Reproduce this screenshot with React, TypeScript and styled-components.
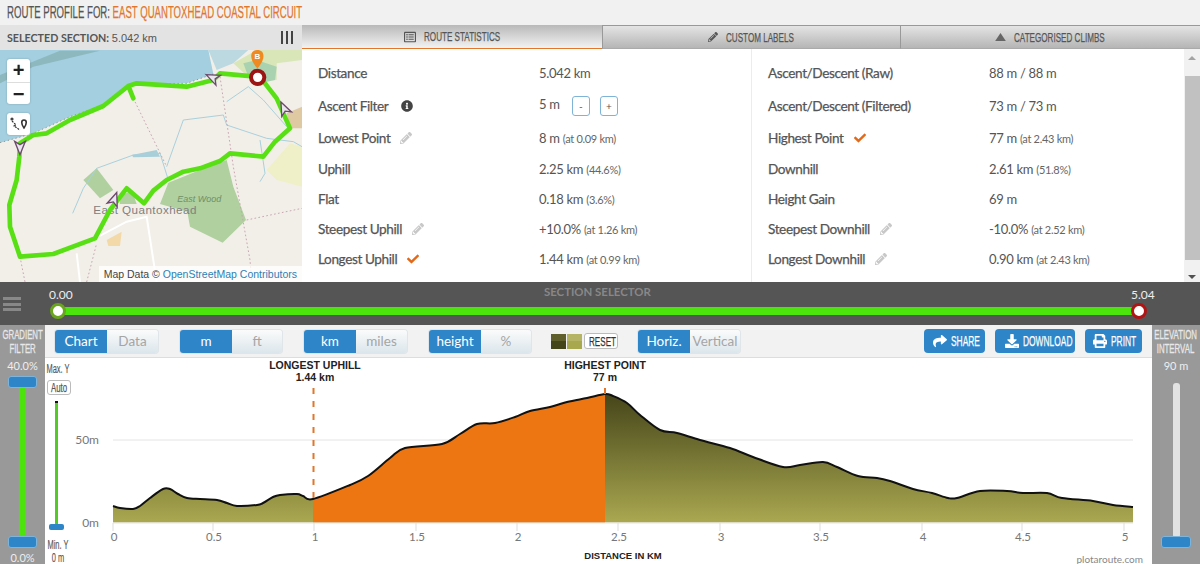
import React from "react";
import styled, { createGlobalStyle } from "styled-components";
import { FaShare, FaDownload, FaPrint, FaPencilAlt, FaCheck, FaInfoCircle, FaRegListAlt } from "react-icons/fa";

const Global = createGlobalStyle`
  html, body { margin: 0; padding: 0; background: #fff; }
  body { font-family: "Lato", "Liberation Sans", sans-serif; overflow: hidden; }
  * { box-sizing: border-box; }
`;

const Page = styled.div`width: 1200px; height: 564px; display: flex; flex-direction: column; overflow: hidden;`;
const Cond = styled.span<{ $w: number; $size?: number }>`
  display: inline-block; width: ${p => p.$w}px; white-space: nowrap; transform-origin: 0 50%; transform: scaleX(.6);
  font-family: "Liberation Sans", sans-serif; font-size: ${p => p.$size ?? 13.5}px; -webkit-text-stroke: .25px currentColor;
`;
const Header = styled.div`height: 25px; background: #f1f1f1; padding-left: 7px; display: flex; align-items: center; color: #555;`;
const Accent = styled.span`color: #e2762a;`;
const Top = styled.div`height: 257px; display: flex;`;
const MapColumn = styled.div`width: 302px; display: flex; flex-direction: column;`;
const SelectedBar = styled.div`
  height: 25px; background: #e3e3e3; display: flex; align-items: center; justify-content: space-between;
  padding: 0 9px 0 7px; font-size: 10.7px; color: #555; white-space: nowrap;
`;
const SelectedValue = styled.span`font-family: "Liberation Sans", sans-serif; font-size: 11px;`;
const ColumnsGlyph = styled.div`
  width: 12px; height: 13px; border-left: 2px solid #444; border-right: 2px solid #444; position: relative;
  &::after { content: ""; position: absolute; left: 3px; top: 0; bottom: 0; width: 2px; background: #444; }
`;
const MapBox = styled.div`position: relative; height: 232px; overflow: hidden; background: #f2efe9;`;
const MapSvg = styled.svg`display: block; width: 302px; height: 232px;`;
const Zoom = styled.div`
  position: absolute; left: 7px; top: 9px; width: 23px; height: 45px; background: #fff; border-radius: 3px;
  display: grid; grid-template-rows: 1fr 1fr; box-shadow: 0 0 2px rgba(0,0,0,.25);
`;
const ZoomKey = styled.div<{ $line?: boolean }>`
  display: flex; align-items: center; justify-content: center; font: bold 20px "Liberation Sans", sans-serif; color: #222;
  border-bottom: ${p => (p.$line ? "1px solid #ddd" : "none")};
`;
const RouteKey = styled.div`
  position: absolute; left: 7px; top: 63px; width: 23px; height: 22px; background: #fff; border-radius: 3px;
  display: flex; align-items: center; justify-content: center; box-shadow: 0 0 2px rgba(0,0,0,.25);
`;
const Attribution = styled.div`
  position: absolute; right: 0; bottom: 0; height: 16px; padding: 0 5px; background: rgba(255,255,255,.8);
  font: 10.5px/16px "Liberation Sans", sans-serif; color: #444; white-space: nowrap;
`;
const OsmLink = styled.span`color: #2f7fb5;`;
const StatsColumn = styled.div`flex: 1; display: flex; flex-direction: column; min-width: 0;`;
const Tabs = styled.div`height: 24px; display: flex;`;
const Tab = styled.div<{ $active?: boolean; $w: number }>`
  width: ${p => p.$w}px; display: flex; align-items: center; justify-content: center; gap: 8px; color: #555;
  background: ${p => (p.$active ? "linear-gradient(#b9b9b9, #f2f2f2)" : "linear-gradient(#e4e4e4, #b5b5b5)")};
  border-bottom: 1px solid ${p => (p.$active ? "#e2762a" : "#aaa")};
  border-left: ${p => (p.$active ? "none" : "1px solid #999")};
  border-top: ${p => (p.$active ? "none" : "1px solid #999")};
  svg { color: #555; }
`;
const StatsBody = styled.div`flex: 1; display: flex; min-height: 0;`;
const StatsPane = styled.div<{ $w: number; $line?: boolean }>`
  width: ${p => p.$w}px; padding: 7px 0 0 16px;
  border-left: ${p => (p.$line ? "1px solid #ececec" : "none")};
`;
const Row = styled.div<{ $h?: number }>`
  height: ${p => p.$h ?? 30}px; display: grid; grid-template-columns: 221px 1fr; align-items: center;
`;
const Label = styled.div`
  font-size: 13.6px; letter-spacing: -.4px; -webkit-text-stroke: .25px #555; color: #555; display: flex; align-items: center; gap: 10px; white-space: nowrap;
`;
const InfoIcon = styled(FaInfoCircle)`margin-left: 3px; color: #444; font-size: 12px;`;
const Value = styled.div`font-size: 13px; letter-spacing: -.3px; color: #555; white-space: nowrap;`;
const Small = styled.span`font-size: 11px; letter-spacing: -.3px; color: #666;`;
const StepButton = styled.span<{ $ml: number }>`
  width: 18px; height: 20px; border: 1px solid #7fb4d8; border-radius: 3px; display: inline-flex; align-items: center; justify-content: center;
  font-size: 10px; color: #555; margin-left: ${p => p.$ml}px; vertical-align: middle;
`;
const Scroll = styled.div`
  width: 16px; background: #f1f1f1; display: flex; flex-direction: column; align-items: center; justify-content: space-between; padding: 7px 0 3px;
`;
const ScrollThumb = styled.div`width: 15px; height: 184px; background: #c1c1c1;`;
const ScrollArrow = styled.div<{ $up?: boolean }>`
  width: 0; height: 0; border-left: 4px solid transparent; border-right: 4px solid transparent;
  ${p => (p.$up ? "border-bottom: 4px solid #a3a3a3;" : "border-top: 4px solid #505050;")}
`;
const SelectorBar = styled.div`height: 43px; background: #555; position: relative;`;
const Burger = styled.div`
  position: absolute; left: 3px; top: 15px; width: 18px; height: 14px;
  border-top: 3px solid #888; border-bottom: 3px solid #888;
  &::after { content: ""; position: absolute; left: 0; right: 0; top: 2.5px; height: 3px; background: #888; }
`;
const SelectorTitle = styled.div`
  position: absolute; left: 544px; top: 3px; font-size: 11.4px; font-weight: 700; color: #888; white-space: nowrap;
`;
const Track = styled.div`position: absolute; left: 58px; width: 1081px; top: 25px; height: 8px; background: #4be30b;`;
const Knob = styled.div<{ $x: number; $c: string }>`
  position: absolute; left: ${p => p.$x - 8}px; top: 21px; width: 16px; height: 16px; border-radius: 50%;
  background: #fff; border: 3.5px solid ${p => p.$c};
`;
const End = styled.div<{ $x: number }>`
  position: absolute; left: ${p => p.$x}px; top: 5px; font-size: 12px; color: #eee;
`;
const Bottom = styled.div`flex: 1; display: flex; min-height: 0;`;
const Side = styled.div<{ $w: number }>`
  width: ${p => p.$w}px; background: #999; display: flex; flex-direction: column; align-items: center; padding-top: 3px; color: #eee; position: relative;
`;
const SideTitle = styled.div`
  width: max-content; transform: scaleX(.6); font: 13px/14px "Liberation Sans", sans-serif; -webkit-text-stroke: .3px #e8e8e8;
  text-align: center; color: #e8e8e8; white-space: nowrap;
`;
const SideValue = styled.div`font-size: 11px; margin-top: 2px; line-height: 16px; color: #eee;`;
const SideFoot = styled(SideValue)`position: absolute; bottom: -2px;`;
const Thumb = styled.div<{ $top: number; $w: number }>`
  position: absolute; top: ${p => p.$top}px; left: 50%; margin-left: ${p => -p.$w / 2}px; width: ${p => p.$w}px; height: 12px;
  background: #2e86c9; border: 1px solid #7db4dc; border-radius: 3px;
`;
const Rail = styled.div<{ $c: string; $top: number; $h: number; $w: number }>`
  position: absolute; top: ${p => p.$top}px; height: ${p => p.$h}px; width: ${p => p.$w}px; left: 50%; margin-left: ${p => -p.$w / 2}px;
  background: ${p => p.$c}; border-radius: 3px;
`;
const Centre = styled.div`flex: 1; display: flex; flex-direction: column; min-width: 0;`;
const Toolbar = styled.div`
  height: 33px; background: #f2f2f2; border-bottom: 1px solid #ddd; display: flex; align-items: center; padding: 0 10px; gap: 22px;
`;
const Segmented = styled.div`display: flex; height: 23px; border-radius: 3px; overflow: hidden; box-shadow: 0 0 0 1px #dfe5e8;`;
const Seg = styled.div<{ $on?: boolean; $w: number }>`
  width: ${p => p.$w}px; display: flex; align-items: center; justify-content: center; font-size: 13.5px;
  color: ${p => (p.$on ? "#fff" : "#a5a5a5")};
  background: ${p => (p.$on ? "#2e86c9" : "linear-gradient(#fbfbfb, #dbe6ec)")};
`;
const Swatches = styled.div`display: flex; align-items: center; gap: 1px; margin: 0 -2px;`;
const Swatch = styled.div<{ $a: string; $b: string }>`
  width: 15px; height: 15px; background: linear-gradient(${p => p.$a} 50%, ${p => p.$b} 50%);
`;
const Reset = styled.div`
  margin-left: 1px; width: 34px; height: 16px; background: #fff; border: 1px solid #bbb; border-radius: 3px; padding-left: 4px;
  color: #333; display: flex; align-items: center;
`;
const Actions = styled.div`margin-left: auto; display: flex; gap: 10px;`;
const Action = styled.div<{ $w: number }>`
  width: ${p => p.$w}px; height: 24px; background: #2e86c9; border-radius: 4px; color: #fff; display: flex; align-items: center; justify-content: center; gap: 4px;
`;
const ChartRow = styled.div`flex: 1; display: flex; min-height: 0; background: #fff;`;
const YColumn = styled.div`width: 30px; position: relative; color: #555;`;
const YText = styled.div<{ $top: number }>`
  position: absolute; top: ${p => p.$top}px; left: -10px; width: 46px; text-align: center; white-space: nowrap;
  transform: scaleX(.62); font: 12px "Liberation Sans", sans-serif; -webkit-text-stroke: .15px #555;
`;
const AutoBtn = styled.div`
  position: absolute; left: 2px; top: 22px; width: 24px; height: 15px; border: 1px solid #bbb; border-radius: 3px; background: #fff;
  padding-left: 3px; display: flex; align-items: center;
`;
const YRail = styled.div`position: absolute; left: 10px; top: 43px; width: 3px; height: 126px; background: #55c926; border-top: 2px solid #111;`;
const YThumb = styled.div`position: absolute; left: 4px; top: 166px; width: 15px; height: 6px; border-radius: 2px; background: #2e86c9;`;
const ChartSvg = styled.svg`display: block; width: 1077px; height: 206px;`;
const ChartLabel = styled.text`font: bold 10.5px "Liberation Sans", sans-serif; fill: #222; text-anchor: middle;`;
const AxisTitle = styled(ChartLabel)`font-size: 9.5px;`;
const Tick = styled.text`font: 11.5px "Lato", sans-serif; fill: #777; text-anchor: middle;`;
const AxisY = styled.text`font: 12px "Lato", sans-serif; fill: #777; text-anchor: end;`;
const Credit = styled.text`font: 10px "Lato", sans-serif; fill: #888; text-anchor: end;`;

const profile: [number, number][] = [
  [113,506],[120,508],[133,509],[140,506],[150,498],[163,489],[170,489],[178,494],[187,498],[200,499],[217,500],[227,503],[237,506],[257,505],[263,503],[273,497],[280,495],[297,494],[303,496],[313,499],
  [350,485],[368,476],[390,458],[405,448],[442,444],[460,434],[477,424],[495,423],[515,417],[530,411],[550,407],[567,402],[587,398],[605,394],
  [613,396],[627,403],[640,415],[660,430],[677,433],[700,440],[730,448],[753,457],[783,467],[800,465],[823,462],[837,467],[858,476],[877,478],[890,481],[913,489],[932,493],[948,498],[957,498],[980,491],[1007,491],[1023,493],[1047,493],[1062,498],[1093,501],[1113,505],[1133,507],
];
const BASE = 522.5;
const smooth = (a: [number, number][]) => {
  let d = `M${a[0][0]} ${a[0][1]}`;
  for (let i = 0; i < a.length - 1; i++) {
    const p0 = a[Math.max(i - 1, 0)], p1 = a[i], p2 = a[i + 1], p3 = a[Math.min(i + 2, a.length - 1)];
    const c1 = [p1[0] + (p2[0] - p0[0]) / 6, p1[1] + (p2[1] - p0[1]) / 6];
    const c2 = [p2[0] - (p3[0] - p1[0]) / 6, p2[1] - (p3[1] - p1[1]) / 6];
    d += ` C${c1[0].toFixed(1)} ${c1[1].toFixed(1)} ${c2[0].toFixed(1)} ${c2[1].toFixed(1)} ${p2[0]} ${p2[1]}`;
  }
  return d;
};
const line = smooth(profile);
const area = `${line} L1133 ${BASE} L113 ${BASE} Z`;
const ticks = [[113,"0"],[213,"0.5"],[314,"1"],[416,"1.5"],[517,"2"],[618,"2.5"],[720,"3"],[820,"3.5"],[922,"4"],[1022,"4.5"],[1124,"5"]] as const;

const route = "60,770 160,762 285,715 330,630 380,565 432,610 460,572 500,540 550,515 600,505 660,483 690,460 790,470 825,425 870,385 850,340 830,295 795,250 770,230 660,220 640,240 560,260 410,250 385,258 400,295 385,258 310,318 210,360 140,400 100,405 60,430 58,470 50,540 28,615 30,680 60,770";

const Arrow = ({ x, y, r }: { x: number; y: number; r: number }) => (
  <g transform={`translate(${x} ${y}) rotate(${r})`}>
    <path d="M0 -24 L16 16 L0 6 L-16 16 Z" fill="#e9e6ee" stroke="#6d4a6d" strokeWidth="4" />
  </g>
);

const RouteMap = () => (
  <MapSvg viewBox="0 150 906 696">
    <rect x="0" y="150" width="906" height="696" fill="#a3cfe0" />
    <path d="M0 428 L100 400 L210 350 L310 315 L385 252 L560 250 L640 222 L625 150 L906 150 L906 846 L0 846 Z" fill="#f2efe9" />
    <path d="M0 250 L100 200 L300 152 L180 152 L0 225 Z" fill="#7fa9a5" opacity=".6" />
    <path d="M625 150 L745 150 L700 190 L650 210 Z" fill="#bcd9e2" />
    <path d="M700 190 L770 150 L906 150 L906 180 L830 190 L830 240 L760 245 Z" fill="#d8e6b8" />
    <path d="M730 190 L770 180 L830 200 L825 240 L780 250 L745 230 Z" fill="#a9d2b0" />
    <path d="M480 612 L505 548 L600 510 L680 480 L700 560 L738 660 L668 728 L570 680 L562 635 Z" fill="#b0d0a0" />
    <path d="M250 540 L290 505 L340 570 L300 595 Z" fill="#b0d0a0" />
    <path d="M360 590 L395 570 L410 612 L360 612 Z" fill="#b0d0a0" />
    <path d="M395 465 L470 450 L480 470 L400 472 Z" fill="#a8cfd8" />
    <path d="M800 510 L870 430 L906 440 L906 560 L830 540 Z" fill="#eff0c8" />
    <path d="M860 340 L906 320 L906 385 L870 385 Z" fill="#dfc9a3" />
    <path d="M320 720 L365 695 L360 738 L325 738 Z" fill="#f3d9a8" />
    <g fill="none" stroke="#a9d0dc" strokeWidth="3">
      <path d="M218 640 L250 565 L290 505 L400 465 L480 460 L505 540" />
      <path d="M500 500 L550 360 L670 345 L680 375 L800 415 L880 425 L906 440" />
      <path d="M780 420 L795 520 L780 545" />
      <path d="M680 305 L745 260 L790 300 L860 380" />
    </g>
    <g fill="none" stroke="#fff" strokeWidth="6">
      <path d="M285 715 L380 665 L440 650 L470 846" />
      <path d="M230 760 L240 846" />
    </g>
    <g fill="none" stroke="#c9a6b0" strokeWidth="3" strokeDasharray="5 7">
      <path d="M400 295 L500 500" />
      <path d="M660 230 L700 500 L750 780 L755 846" />
      <path d="M740 660 L906 625" />
      <path d="M60 770 L75 846" />
      <path d="M260 846 L290 730" />
    </g>
    <path d="M0 428 L100 400 L210 350 L310 315 L385 252 L560 250 L640 222" fill="none" stroke="#8f9a98" strokeWidth="3" strokeDasharray="4 8" />
    <text x="280" y="641" fontFamily="Liberation Sans, sans-serif" fontSize="35" fill="#808080" letterSpacing="1.3">East Quantoxhead</text>
    <text x="532" y="606" fontFamily="Liberation Sans, sans-serif" fontSize="27" fontStyle="italic" fill="#6f8f66">East Wood</text>
    <polyline points={route} fill="none" stroke="#58e015" strokeWidth="14" strokeLinejoin="round" strokeLinecap="round" />
    <Arrow x={60} y={440} r={180} />
    <Arrow x={342} y={600} r={20} />
    <Arrow x={640} y={234} r={-65} />
    <Arrow x={853} y={328} r={-25} />
    <path d="M772 205 C745 175 750 150 772 150 C794 150 799 175 772 205 Z" fill="#ee8a1f" />
    <text x="772" y="178" textAnchor="middle" fontFamily="Liberation Sans, sans-serif" fontWeight="700" fontSize="24" fill="#fff">B</text>
    <circle cx="773" cy="232" r="20" fill="#fff" stroke="#9c1414" strokeWidth="12" />
  </MapSvg>
);

const Triangle = () => (
  <svg width="11" height="8" viewBox="0 0 12 9"><path d="M6 0 L12 9 L0 9 Z" fill="#666" /></svg>
);
const Pencil = () => <FaPencilAlt size={12} color="#c8c8c8" />;
const Tickmark = () => <FaCheck size={12} color="#e2691a" />;

export default function App() {
  return (
    <Page>
      <Global />
      <Header><Cond $w={294} $size={16}>ROUTE PROFILE FOR: <Accent>EAST QUANTOXHEAD COASTAL CIRCUIT</Accent></Cond></Header>
      <Top>
        <MapColumn>
          <SelectedBar>
            <span><b>SELECTED SECTION:</b> <SelectedValue>5.042 km</SelectedValue></span>
            <ColumnsGlyph />
          </SelectedBar>
          <MapBox>
            <RouteMap />
            <Zoom><ZoomKey $line>+</ZoomKey><ZoomKey>−</ZoomKey></Zoom>
            <RouteKey>
              <svg width="19" height="16" viewBox="0 0 19 16">
                <circle cx="3" cy="3" r="1.6" fill="#444" />
                <path d="M3 5 L7 9 L5 10 L11 14" fill="none" stroke="#333" strokeWidth="1.2" strokeDasharray="2 1" />
                <path d="M15 12 C12 8 12 4 15 4 C18 4 18 8 15 12 Z" fill="none" stroke="#333" strokeWidth="1.6" />
              </svg>
            </RouteKey>
            <Attribution>Map Data © <OsmLink>OpenStreetMap Contributors</OsmLink></Attribution>
          </MapBox>
        </MapColumn>
        <StatsColumn>
          <Tabs>
            <Tab $active $w={300}><FaRegListAlt size={12} /> <Cond $w={77}>ROUTE STATISTICS</Cond></Tab>
            <Tab $w={298}><FaPencilAlt size={10} /> <Cond $w={70}>CUSTOM LABELS</Cond></Tab>
            <Tab $w={300}><Triangle /> <Cond $w={93}>CATEGORISED CLIMBS</Cond></Tab>
          </Tabs>
          <StatsBody>
            <StatsPane $w={449}>
              <Row $h={33}><Label>Distance</Label><Value>5.042 km</Value></Row>
              <Row $h={33}><Label>Ascent Filter <InfoIcon /></Label><Value>5 m<StepButton $ml={12}>-</StepButton><StepButton $ml={10}>+</StepButton></Value></Row>
              <Row $h={32}><Label>Lowest Point <Pencil /></Label><Value>8 m <Small>(at 0.09 km)</Small></Value></Row>
              <Row><Label>Uphill</Label><Value>2.25 km <Small>(44.6%)</Small></Value></Row>
              <Row><Label>Flat</Label><Value>0.18 km <Small>(3.6%)</Small></Value></Row>
              <Row><Label>Steepest Uphill <Pencil /></Label><Value>+10.0% <Small>(at 1.26 km)</Small></Value></Row>
              <Row><Label>Longest Uphill <Tickmark /></Label><Value>1.44 km <Small>(at 0.99 km)</Small></Value></Row>
            </StatsPane>
            <StatsPane $w={433} $line>
              <Row $h={33}><Label>Ascent/Descent (Raw)</Label><Value>88 m / 88 m</Value></Row>
              <Row $h={33}><Label>Ascent/Descent (Filtered)</Label><Value>73 m / 73 m</Value></Row>
              <Row $h={32}><Label>Highest Point <Tickmark /></Label><Value>77 m <Small>(at 2.43 km)</Small></Value></Row>
              <Row><Label>Downhill</Label><Value>2.61 km <Small>(51.8%)</Small></Value></Row>
              <Row><Label>Height Gain</Label><Value>69 m</Value></Row>
              <Row><Label>Steepest Downhill <Pencil /></Label><Value>-10.0% <Small>(at 2.52 km)</Small></Value></Row>
              <Row><Label>Longest Downhill <Pencil /></Label><Value>0.90 km <Small>(at 2.43 km)</Small></Value></Row>
            </StatsPane>
            <Scroll><ScrollArrow $up /><ScrollThumb /><ScrollArrow /></Scroll>
          </StatsBody>
        </StatsColumn>
      </Top>
      <SelectorBar>
        <Burger />
        <SelectorTitle>SECTION SELECTOR</SelectorTitle>
        <End $x={49}>0.00</End>
        <End $x={1131}>5.04</End>
        <Track />
        <Knob $x={58} $c="#6aa51e" />
        <Knob $x={1139} $c="#b01414" />
      </SelectorBar>
      <Bottom>
        <Side $w={45}>
          <SideTitle>GRADIENT<br />FILTER</SideTitle>
          <SideValue>40.0%</SideValue>
          <Rail $c="#4be30b" $top={60} $h={152} $w={7} />
          <Thumb $top={51} $w={29} />
          <Thumb $top={211} $w={29} />
          <SideFoot>0.0%</SideFoot>
        </Side>
        <Centre>
          <Toolbar>
            <Segmented><Seg $on $w={52}>Chart</Seg><Seg $w={51}>Data</Seg></Segmented>
            <Segmented><Seg $on $w={52}>m</Seg><Seg $w={50}>ft</Seg></Segmented>
            <Segmented><Seg $on $w={52}>km</Seg><Seg $w={51}>miles</Seg></Segmented>
            <Segmented><Seg $on $w={52}>height</Seg><Seg $w={50}>%</Seg></Segmented>
            <Swatches>
              <Swatch $a="#5f5f2c" $b="#45451a" />
              <Swatch $a="#b4b464" $b="#a8a84e" />
              <Reset><Cond $w={26} $size={13.5}>RESET</Cond></Reset>
            </Swatches>
            <Segmented><Seg $on $w={52}>Horiz.</Seg><Seg $w={50}>Vertical</Seg></Segmented>
            <Actions>
              <Action $w={61}><FaShare size={14} /> <Cond $w={26} $size={14}>SHARE</Cond></Action>
              <Action $w={80}><FaDownload size={14} /> <Cond $w={43} $size={14}>DOWNLOAD</Cond></Action>
              <Action $w={57}><FaPrint size={14} /> <Cond $w={23} $size={14}>PRINT</Cond></Action>
            </Actions>
          </Toolbar>
          <ChartRow>
            <YColumn>
              <YText $top={4}>Max. Y</YText>
              <AutoBtn><Cond $w={18} $size={13}>Auto</Cond></AutoBtn>
              <YRail />
              <YThumb />
              <YText $top={180}>Min. Y</YText>
              <YText $top={193}>0 m</YText>
            </YColumn>
            <ChartSvg viewBox="75 358 1077 206">
              <defs>
                <linearGradient id="olive" gradientUnits="userSpaceOnUse" x1="0" y1="394" x2="0" y2="522.5">
                  <stop offset="0" stopColor="#45451a" />
                  <stop offset="1" stopColor="#aaa850" />
                </linearGradient>
                <clipPath id="profileClip"><path d={area} /></clipPath>
              </defs>
              <line x1="113" y1="440" x2="1133" y2="440" stroke="#e4e4e4" />
              <g clipPath="url(#profileClip)">
                <rect x="113" y="380" width="1020" height="143" fill="url(#olive)" />
                <rect x="313" y="380" width="292" height="143" fill="#ee7612" />
              </g>
              <path d={line} fill="none" stroke="#111" strokeWidth="2" strokeLinejoin="round" />
              <line x1="313.5" y1="388" x2="313.5" y2="499" stroke="#e2762a" strokeWidth="2" strokeDasharray="6 7" />
              <line x1="605" y1="388" x2="605" y2="394" stroke="#e2762a" strokeWidth="2" />
              <line x1="113" y1="523" x2="1133" y2="523" stroke="#e4e4e4" />
              {ticks.map(([x, t]) => (
                <g key={t}>
                  <line x1={x} y1="523" x2={x} y2="531" stroke="#ddd" />
                  <Tick x={x + 1} y="541">{t}</Tick>
                </g>
              ))}
              <AxisY x="99" y="444">50m</AxisY>
              <AxisY x="99" y="527">0m</AxisY>
              <ChartLabel x="315" y="369">LONGEST UPHILL</ChartLabel>
              <ChartLabel x="315" y="381">1.44 km</ChartLabel>
              <ChartLabel x="605" y="369">HIGHEST POINT</ChartLabel>
              <ChartLabel x="605" y="381">77 m</ChartLabel>
              <AxisTitle x="623" y="559">DISTANCE IN KM</AxisTitle>
              <Credit x="1143" y="563">plotaroute.com</Credit>
            </ChartSvg>
          </ChartRow>
        </Centre>
        <Side $w={48}>
          <SideTitle>ELEVATION<br />INTERVAL</SideTitle>
          <SideValue>90 m</SideValue>
          <Rail $c="#e2e2e2" $top={58} $h={155} $w={7} />
          <Thumb $top={211} $w={30} />
        </Side>
      </Bottom>
    </Page>
  );
}
